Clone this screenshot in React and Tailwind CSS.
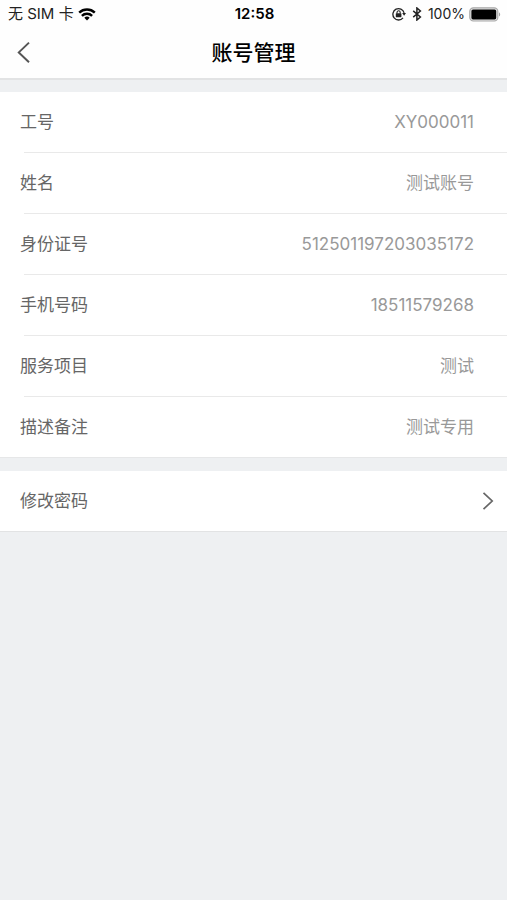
const PROFILE = [
  { label: '工号', value: 'XY000011' },
  { label: '姓名', value: '测试账号' },
  { label: '身份证号', value: '512501197203035172' },
  { label: '手机号码', value: '18511579268' },
  { label: '服务项目', value: '测试' },
  { label: '描述备注', value: '测试专用' },
]

function WifiIcon() {
  return (
    <svg viewBox="0 0 18 13" className="h-[13px] w-[18px]" fill="none" stroke="#000" strokeWidth="2.5">
      <path d="M1.2 4.6 A11.5 11.5 0 0 1 16.8 4.6" />
      <path d="M3.9 7.9 A7.4 7.4 0 0 1 14.1 7.9" />
      <path d="M9 12.4 L6.3 9.8 A3.9 3.9 0 0 1 11.7 9.8 Z" fill="#000" stroke="none" />
    </svg>
  )
}

function RotationLockIcon() {
  return (
    <svg viewBox="0 0 14 14" className="h-[14px] w-[14px]" fill="none" stroke="#222" strokeWidth="1.3">
      <path d="M11 10.9 A5.7 5.7 0 1 1 12.1 5.8" />
      <path d="M10.2 6 H14 L12.1 8.8 Z" fill="#222" stroke="none" />
      <rect x="3.8" y="6.2" width="5.6" height="4" rx="0.5" fill="#222" stroke="none" />
      <path d="M5 6.6 V5.4 A1.6 1.6 0 0 1 8.2 5.4 V6.6" strokeWidth="1.1" />
    </svg>
  )
}

function BluetoothIcon() {
  return (
    <svg viewBox="0 0 10 14" className="h-[14px] w-[10px]" fill="none" stroke="#222" strokeWidth="1.5">
      <path d="M1.2 3.9 L8.4 10 L4.9 13 V1 L8.4 4 L1.2 10.1" />
    </svg>
  )
}

function BatteryIcon() {
  return (
    <svg viewBox="0 0 32 15" className="h-[15px] w-[32px]">
      <rect x="0.8" y="0.8" width="28" height="13.2" rx="3.6" fill="#e4e4e4" stroke="#a8a8a8" strokeWidth="1.2" />
      <rect x="2.4" y="2.4" width="24.8" height="10" rx="1.6" fill="#000" />
      <path d="M30 5.2 C31.6 6 31.6 8.8 30 9.6 Z" fill="#a3a3a3" />
    </svg>
  )
}

function StatusBar() {
  return (
    <div className="grid h-7 grid-cols-3 items-center pr-1.5 pl-2 text-[15px] leading-5 text-[#222]">
      <div className="flex items-center gap-1">
        <span>无 SIM 卡</span>
        <WifiIcon />
      </div>
      <span className="text-center font-semibold text-black">12:58</span>
      <div className="flex items-center justify-end gap-1.5">
        <RotationLockIcon />
        <BluetoothIcon />
        <div className="flex items-center gap-1 text-sm">
          <span>100%</span>
          <BatteryIcon />
        </div>
      </div>
    </div>
  )
}

function NavBar() {
  return (
    <header className="grid h-[52px] grid-cols-[48px_1fr_48px] items-center border-b-2 border-[#e2e3e4]">
      <button type="button" aria-label="返回" className="flex h-full items-center pl-4">
        <svg viewBox="0 0 16 24" className="h-6 w-4" fill="none" stroke="#555" strokeWidth="2">
          <path d="M13 1.6 L2.8 11.4 L13 21.2" />
        </svg>
      </button>
      <h1 className="text-center text-[21px] leading-7 font-medium text-black">账号管理</h1>
    </header>
  )
}

export default function App() {
  return (
    <div className="min-h-screen bg-[#eef0f2] font-['Inter','Noto_Sans_CJK_SC',sans-serif]">
      <div className="bg-[#fefefe]">
        <StatusBar />
        <NavBar />
      </div>

      <main className="pt-3">
        {/* Profile fields */}
        <dl className="border-b border-[#e6e7e8] bg-white">
          {PROFILE.map(({ label, value }, i) => (
            <div key={label}>
              {i > 0 && <div className="ml-6 h-px bg-[#e9e9e9]" />}
              <div className="flex h-[60px] items-center justify-between pr-[33px] pl-5 text-[17px] leading-6">
                <dt className="text-[#666]">{label}</dt>
                <dd className="text-[#999]">{value}</dd>
              </div>
            </div>
          ))}
        </dl>

        {/* Change password */}
        <button
          type="button"
          className="mt-[13px] flex h-[61px] w-full items-center justify-between border-b border-[#e2e3e4] bg-white pr-3 pl-5 text-[17px] leading-6 text-[#666]"
        >
          <span>修改密码</span>
          <svg viewBox="0 0 14 20" className="h-5 w-3.5" fill="none" stroke="#666" strokeWidth="1.7">
            <path d="M2.5 1.8 L11.2 10 L2.5 18.2" />
          </svg>
        </button>
      </main>
    </div>
  )
}
